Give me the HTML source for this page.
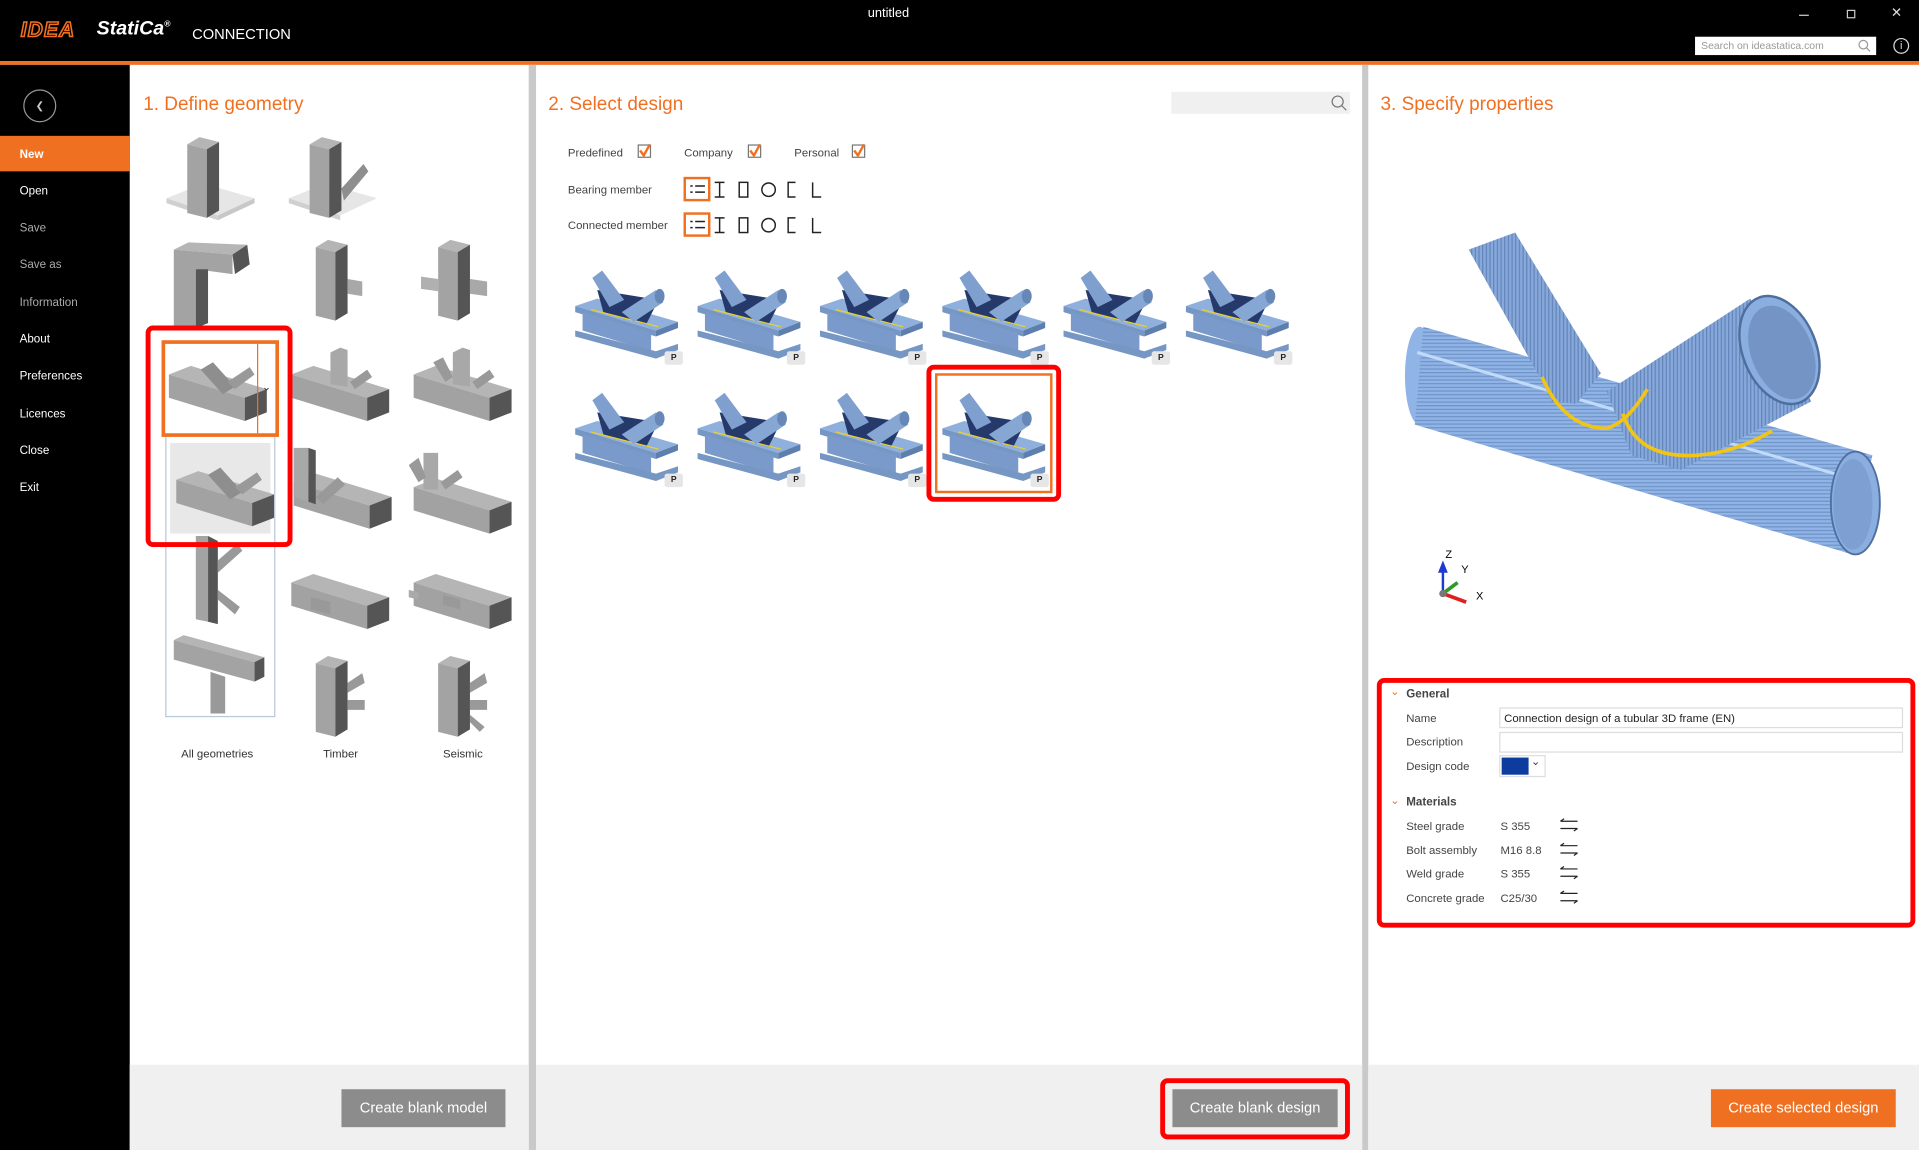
<!DOCTYPE html>
<html><head><meta charset="utf-8">
<style>
*{margin:0;padding:0;box-sizing:border-box}
html,body{width:1919px;height:1150px;overflow:hidden;background:#fff;font-family:"Liberation Sans",sans-serif}
#w{position:absolute;left:0;top:0;width:1568px;height:940px;transform:scale(1.22385);transform-origin:0 0;background:#fff}
.a{position:absolute}
.t{position:absolute;white-space:nowrap}
.menu{color:#fff;font-size:9.5px;left:16px}
.h{color:#f07022;font-size:15.5px}
.lbl{font-size:9.3px;color:#444}
.btn{position:absolute;color:#fff;font-size:12px;text-align:center;line-height:31px}
.rb{position:absolute;border:4px solid #f00;border-radius:6px}
.p{position:absolute;width:15px;height:11px;background:#e6e6e6;border-radius:2px;font-size:7px;font-weight:bold;text-align:center;line-height:11px;color:#222}
</style></head><body>
<div id="w">
<svg width="0" height="0" style="position:absolute">
<defs>
<g id="beam">
<polygon points="4,28 22,21 84,40 66,47" fill="#b5b5b5"/>
<polygon points="4,28 66,47 66,66 4,47" fill="#a2a2a2"/>
<polygon points="66,47 84,40 84,59 66,66" fill="#555"/>
</g>
<g id="col">
<polygon points="26,14 36,8 52,12 42,18" fill="#b5b5b5"/>
<polygon points="26,14 42,18 42,74 26,70" fill="#a3a3a3"/>
<polygon points="42,18 52,12 52,68 42,74" fill="#555"/>
</g>
<g id="diag">
<polygon points="30,24 40,18 58,38 48,44" fill="#8e8e8e"/>
<polygon points="52,34 70,22 74,28 58,40" fill="#999"/>
</g>
<g id="bt">
<polygon points="2,35 20,29 86,48 68,55" fill="#8fb0dc"/>
<polygon points="2,35 68,55 68,60 2,40" fill="#7696c4"/>
<polygon points="8,40 64,57 64,72 8,55" fill="#7a9acb"/>
<polygon points="2,55 68,72 86,66 86,71 68,78 2,60" fill="#7696c4"/>
<polygon points="68,55 86,48 86,53 68,60" fill="#5e7fae"/>
<polygon points="20,22 70,30 60,50 25,40" fill="#253a6b"/>
<line x1="15" y1="38" x2="70" y2="52" stroke="#e8d030" stroke-width="1"/>
<polygon points="16,12 24,6 42,30 30,36" fill="#7f9fcf"/>
<polygon points="40,40 68,22 74,32 50,48" fill="#86a6d4"/>
<ellipse cx="71" cy="27" rx="4" ry="6" fill="#6787b6"/>
</g>
</defs>
</svg>

<!-- header -->
<div class="a" style="left:0;top:0;width:1568px;height:50px;background:#000"></div>
<div class="a" style="left:0;top:50px;width:1568px;height:3px;background:#f07022"></div>
<div class="t" style="left:17px;top:15px;font-size:17px;font-weight:bold;font-style:italic;color:#000;-webkit-text-stroke:1.3px #f07022;letter-spacing:1px">IDEA</div>
<div class="t" style="left:79px;top:15px;font-size:16px;font-weight:bold;font-style:italic;color:#fff">StatiCa<sup style="font-size:7px">®</sup></div>
<div class="t" style="left:157px;top:21px;font-size:12px;color:#fff">CONNECTION</div>
<div class="t" style="left:709px;top:5px;font-size:10.5px;color:#fff">untitled</div>
<div class="a" style="left:1470px;top:12px;width:8px;height:1px;background:#ccc"></div>
<div class="a" style="left:1509px;top:8px;width:7px;height:7px;border:1px solid #ccc"></div>
<div class="t" style="left:1545px;top:4px;font-size:11px;color:#ddd">✕</div>
<div class="a" style="left:1385px;top:30px;width:148px;height:15px;background:#fff"></div>
<div class="t" style="left:1390px;top:32px;font-size:8.5px;color:#999">Search on ideastatica.com</div>
<svg class="a" style="left:1518px;top:32px" width="11" height="11"><circle cx="4.5" cy="4.5" r="3.5" fill="none" stroke="#999"/><line x1="7" y1="7" x2="10" y2="10" stroke="#999"/></svg>
<div class="a" style="left:1547px;top:31px;width:13px;height:13px;border:1px solid #ddd;border-radius:50%;color:#ddd;font-size:9px;text-align:center;line-height:11px">i</div>

<!-- sidebar -->
<div class="a" style="left:0;top:53px;width:106px;height:887px;background:#000"></div>
<div class="a" style="left:19px;top:73px;width:27px;height:27px;border:1px solid #999;border-radius:50%;color:#ccc;font-size:8px;text-align:center;line-height:25px">&#10094;</div>
<div class="a" style="left:0;top:111px;width:106px;height:29px;background:#f07022"></div>
<div class="t menu" style="top:121px;font-weight:bold">New</div>
<div class="t menu" style="top:151px">Open</div>
<div class="t menu" style="top:181px;color:#aaa">Save</div>
<div class="t menu" style="top:211px;color:#aaa">Save as</div>
<div class="t menu" style="top:242px;color:#aaa">Information</div>
<div class="t menu" style="top:272px">About</div>
<div class="t menu" style="top:302px">Preferences</div>
<div class="t menu" style="top:333px">Licences</div>
<div class="t menu" style="top:363px">Close</div>
<div class="t menu" style="top:393px">Exit</div>

<!-- separators and bottom bars -->
<div class="a" style="left:432px;top:53px;width:6px;height:887px;background:#c9c9c9"></div>
<div class="a" style="left:1113px;top:53px;width:5px;height:887px;background:#c9c9c9"></div>
<div class="a" style="left:106px;top:870px;width:326px;height:70px;background:#f0f0f0"></div>
<div class="a" style="left:438px;top:870px;width:675px;height:70px;background:#f0f0f0"></div>
<div class="a" style="left:1118px;top:870px;width:450px;height:70px;background:#f0f0f0"></div>

<!-- panel 1 -->
<div class="t h" style="left:117px;top:77px">1. Define geometry</div>
<svg class="a" style="left:132px;top:108px" width="300" height="520">
 <g transform="translate(4,34)"><polygon points="0,20 30,8 72,20 42,34" fill="#e6e6e6"/><polygon points="0,20 42,34 42,38 0,24" fill="#d0d0d0"/><polygon points="42,34 72,20 72,24 42,38" fill="#c8c8c8"/></g>
 <g transform="translate(-5,-4)"><use href="#col"/></g>
 <g transform="translate(104,34)"><polygon points="0,20 30,8 72,20 42,34" fill="#e6e6e6"/><polygon points="0,20 42,34 42,38 0,24" fill="#d0d0d0"/></g>
 <g transform="translate(95,-4)"><use href="#col"/><polygon points="52,50 70,30 74,36 54,60" fill="#8e8e8e"/></g>
 <g transform="translate(10,88)"><polygon points="0,8 12,2 60,4 48,12" fill="#b5b5b5"/><polygon points="0,8 48,12 48,28 18,24 18,72 0,72" fill="#a3a3a3"/><polygon points="48,12 60,4 62,20 50,28" fill="#555"/><polygon points="18,24 28,24 28,68 18,72" fill="#555"/></g>
 <g transform="translate(100,80)"><use href="#col"/><polygon points="52,40 64,42 64,54 52,52" fill="#a8a8a8"/></g>
 <g transform="translate(200,80)"><use href="#col"/><polygon points="52,40 66,42 66,54 52,52" fill="#a8a8a8"/><polygon points="12,38 26,40 26,50 12,48" fill="#b0b0b0"/></g>
 <g transform="translate(2,170)"><use href="#beam"/><use href="#diag"/></g>
 <g transform="translate(102,170)"><use href="#beam"/><polygon points="36,10 44,6 50,8 50,38 36,36" fill="#a8a8a8"/><polygon points="52,34 66,24 70,30 56,40" fill="#999"/></g>
 <g transform="translate(202,170)"><use href="#beam"/><polygon points="36,10 44,6 50,8 50,38 36,36" fill="#a8a8a8"/><polygon points="20,18 28,14 36,30 30,34" fill="#999"/><polygon points="52,34 66,24 70,30 56,40" fill="#999"/></g>
 <rect x="7" y="254" width="82" height="74" fill="#e8e8e8"/>
 <g transform="translate(8,256)"><use href="#beam"/><use href="#diag"/></g>
 <g transform="translate(104,258)"><use href="#beam"/><polygon points="4,0 16,0 16,44 4,40" fill="#a8a8a8"/><polygon points="16,0 22,2 22,46 16,44" fill="#555"/><polygon points="22,40 40,24 46,30 28,46" fill="#999"/></g>
 <g transform="translate(202,262)"><use href="#beam"/><polygon points="12,0 24,0 24,30 12,30" fill="#a8a8a8"/><polygon points="0,10 8,4 14,20 8,24" fill="#999"/><polygon points="26,24 40,14 44,20 30,30" fill="#999"/></g>
 <g transform="translate(12,330)"><polygon points="16,0 26,0 26,70 16,68" fill="#a3a3a3"/><polygon points="26,0 34,4 34,72 26,70" fill="#555"/><polygon points="34,20 50,6 54,12 34,30" fill="#999"/><polygon points="34,44 52,58 48,64 34,52" fill="#999"/></g>
 <g transform="translate(102,340)"><use href="#beam"/><polygon points="20,40 36,44 36,54 20,50" fill="#999"/></g>
 <g transform="translate(202,340)"><use href="#beam"/><polygon points="28,38 42,42 42,50 28,46" fill="#999"/><polygon points="0,34 8,36 8,42 0,40" fill="#aaa"/></g>
 <g transform="translate(10,405)"><polygon points="0,10 8,6 74,24 66,28" fill="#b5b5b5"/><polygon points="0,10 66,28 66,44 0,26" fill="#a3a3a3"/><polygon points="66,28 74,24 74,40 66,44" fill="#555"/><polygon points="30,36 42,40 42,70 30,70" fill="#999"/></g>
 <g transform="translate(100,420)"><use href="#col"/><polygon points="52,30 64,22 66,30 52,38" fill="#999"/><polygon points="52,44 66,44 66,52 52,52" fill="#999"/></g>
 <g transform="translate(200,420)"><use href="#col"/><polygon points="52,30 64,22 66,30 52,38" fill="#999"/><polygon points="52,44 66,44 66,52 52,52" fill="#999"/><polygon points="52,56 64,66 60,70 52,62" fill="#999"/></g>
</svg>
<div class="a" style="left:135px;top:356px;width:90px;height:230px;border:1px solid #b8c8dc;border-top:0"></div>
<div class="a" style="left:132px;top:278px;width:96px;height:79px;border:3px solid #f07022;background:transparent"></div>
<div class="a" style="left:210px;top:281px;width:1px;height:73px;background:#f07022"></div>
<div class="t" style="left:214px;top:311px;font-size:9px;color:#333">&#8964;</div>
<div class="rb" style="left:119px;top:266px;width:120px;height:181px"></div>
<div class="t lbl" style="left:148px;top:611px;color:#333">All geometries</div>
<div class="t lbl" style="left:264px;top:611px;color:#333">Timber</div>
<div class="t lbl" style="left:362px;top:611px;color:#333">Seismic</div>
<div class="btn" style="left:279px;top:890px;width:134px;height:31px;background:#8c8c8c">Create blank model</div>

<!-- panel 2 -->
<div class="t h" style="left:448px;top:77px">2. Select design</div>
<div class="a" style="left:957px;top:75px;width:146px;height:18px;background:#f0f0f0"></div>
<svg class="a" style="left:1087px;top:77px" width="14" height="14"><circle cx="6" cy="6" r="4.5" fill="none" stroke="#777"/><line x1="9" y1="9" x2="13" y2="13" stroke="#777"/></svg>
<div class="t lbl" style="left:464px;top:120px">Predefined</div>
<div class="t lbl" style="left:559px;top:120px">Company</div>
<div class="t lbl" style="left:649px;top:120px">Personal</div>
<svg class="a" style="left:520px;top:117px" width="200" height="14">
<g fill="none"><rect x="1.5" y="1.5" width="10" height="10" stroke="#777"/><path d="M3 6 L6 10 L11 1" stroke="#f07022" stroke-width="2"/>
<rect x="91.5" y="1.5" width="10" height="10" stroke="#777"/><path d="M93 6 L96 10 L101 1" stroke="#f07022" stroke-width="2"/>
<rect x="176.5" y="1.5" width="10" height="10" stroke="#777"/><path d="M178 6 L181 10 L186 1" stroke="#f07022" stroke-width="2"/></g></svg>
<div class="t lbl" style="left:464px;top:150px">Bearing member</div>
<div class="t lbl" style="left:464px;top:179px">Connected member</div>
<svg class="a" style="left:558px;top:144px" width="120" height="50">
<g fill="none" stroke="#222" stroke-width="1.2">
<rect x="1.5" y="1.5" width="20" height="18" stroke="#f07022" stroke-width="2"/>
<path d="M6 8h2M6 13h2M10 8h8M10 13h8"/>
<path d="M26 5h8M30 5v12M26 17h8"/><rect x="46" y="5" width="7" height="12"/><circle cx="70" cy="11" r="5.5"/><path d="M92 5h-6v12h6"/><path d="M106 5v12h7"/>
<g transform="translate(0,29)"><rect x="1.5" y="1.5" width="20" height="18" stroke="#f07022" stroke-width="2"/>
<path d="M6 8h2M6 13h2M10 8h8M10 13h8"/>
<path d="M26 5h8M30 5v12M26 17h8"/><rect x="46" y="5" width="7" height="12"/><circle cx="70" cy="11" r="5.5"/><path d="M92 5h-6v12h6"/><path d="M106 5v12h7"/></g>
</g></svg>
<svg class="a" style="left:468px;top:215px" width="600" height="180">
<use href="#bt" x="0" y="0"/><use href="#bt" x="100" y="0"/><use href="#bt" x="200" y="0"/><use href="#bt" x="300" y="0"/><use href="#bt" x="399" y="0"/><use href="#bt" x="499" y="0"/>
<use href="#bt" x="0" y="100"/><use href="#bt" x="100" y="100"/><use href="#bt" x="200" y="100"/><use href="#bt" x="300" y="100"/>
</svg>
<div class="p" style="left:543px;top:287px">P</div><div class="p" style="left:643px;top:287px">P</div><div class="p" style="left:742px;top:287px">P</div><div class="p" style="left:842px;top:287px">P</div><div class="p" style="left:941px;top:287px">P</div><div class="p" style="left:1041px;top:287px">P</div>
<div class="p" style="left:543px;top:387px">P</div><div class="p" style="left:643px;top:387px">P</div><div class="p" style="left:742px;top:387px">P</div><div class="p" style="left:842px;top:387px">P</div>
<div class="a" style="left:764px;top:305px;width:96px;height:98px;border:2px solid #f07022"></div>
<div class="rb" style="left:757px;top:298px;width:110px;height:112px"></div>
<div class="btn" style="left:958px;top:890px;width:135px;height:31px;background:#8c8c8c">Create blank design</div>
<div class="rb" style="left:948px;top:881px;width:155px;height:50px"></div>

<!-- panel 3 -->
<div class="t h" style="left:1128px;top:77px">3. Specify properties</div>
<svg class="a" style="left:1118px;top:160px" width="450" height="350">
<defs><pattern id="st" width="3" height="3" patternUnits="userSpaceOnUse"><rect width="3" height="3" fill="#90b4e6"/><rect width="3" height="1" fill="#7093c8"/></pattern>
<pattern id="st2" width="3" height="3" patternUnits="userSpaceOnUse"><rect width="3" height="3" fill="#86a8da"/><rect width="1" height="3" fill="#6284b8"/></pattern></defs>
<!-- main tube -->
<ellipse cx="42" cy="147" rx="12" ry="40" fill="#90b4e6"/>
<polygon points="45,107 412,212 392,292 38,187" fill="url(#st)"/>
<line x1="40" y1="128" x2="405" y2="234" stroke="#c0daf8" stroke-width="2.5"/>
<ellipse cx="398" cy="251" rx="20" ry="42" fill="#8aaee0" stroke="#4e6e9e" stroke-width="1.5"/>
<ellipse cx="396" cy="252" rx="16" ry="37" fill="#7e9fd2"/>
<!-- diag tube 1 -->
<polygon points="82,44 120,30 190,145 170,170 150,168 140,148" fill="url(#st2)"/>
<!-- diag tube 2 -->
<polygon points="195,160 312,84 362,168 255,224 215,212" fill="url(#st2)"/>
<ellipse cx="336" cy="126" rx="30" ry="46" transform="rotate(-22 336 126)" fill="#8aaee0" stroke="#4e6e9e" stroke-width="2"/>
<ellipse cx="338" cy="128" rx="25" ry="40" transform="rotate(-22 338 128)" fill="#7594c6"/>
<path d="M142 148 Q160 190 195 190 Q212 185 228 158 M208 178 Q220 215 268 212 Q300 210 330 192" fill="none" stroke="#f0c418" stroke-width="3"/>
<!-- axes -->
<line x1="61" y1="325" x2="61" y2="305" stroke="#1f3ad0" stroke-width="2"/><polygon points="57,308 61,298 65,308" fill="#1f3ad0"/>
<line x1="61" y1="325" x2="73" y2="316" stroke="#2a9a2a" stroke-width="3"/>
<line x1="61" y1="325" x2="80" y2="332" stroke="#e02020" stroke-width="3"/>
<circle cx="61" cy="325" r="3" fill="#777"/>
<text x="63" y="296" font-size="9" font-family="Liberation Sans">Z</text><text x="76" y="308" font-size="9" font-family="Liberation Sans">Y</text><text x="88" y="330" font-size="9" font-family="Liberation Sans">X</text>
</svg>

<div class="t" style="left:1136px;top:560px;font-size:9px;color:#f07022">&#8964;</div>
<div class="t" style="left:1149px;top:562px;font-size:9.5px;font-weight:bold;color:#444">General</div>
<div class="t lbl" style="left:1149px;top:582px">Name</div>
<div class="a" style="left:1225px;top:578px;width:330px;height:17px;border:1px solid #ddd"></div>
<div class="t" style="left:1229px;top:582px;font-size:9.3px;color:#222">Connection design of a tubular 3D frame (EN)</div>
<div class="t lbl" style="left:1149px;top:601px">Description</div>
<div class="a" style="left:1225px;top:598px;width:330px;height:17px;border:1px solid #ddd"></div>
<div class="t lbl" style="left:1149px;top:621px">Design code</div>
<div class="a" style="left:1225px;top:617px;width:38px;height:18px;border:1px solid #ddd"></div>
<div class="a" style="left:1227px;top:619px;width:22px;height:14px;background:#0e3b9e"></div>
<div class="t" style="left:1251px;top:617px;font-size:9px;color:#333">&#8964;</div>
<div class="t" style="left:1136px;top:649px;font-size:9px;color:#f07022">&#8964;</div>
<div class="t" style="left:1149px;top:650px;font-size:9.5px;font-weight:bold;color:#444">Materials</div>
<div class="t lbl" style="left:1149px;top:670px">Steel grade</div><div class="t lbl" style="left:1226px;top:670px">S 355</div>
<div class="t lbl" style="left:1149px;top:690px">Bolt assembly</div><div class="t lbl" style="left:1226px;top:690px">M16 8.8</div>
<div class="t lbl" style="left:1149px;top:709px">Weld grade</div><div class="t lbl" style="left:1226px;top:709px">S 355</div>
<div class="t lbl" style="left:1149px;top:729px">Concrete grade</div><div class="t lbl" style="left:1226px;top:729px">C25/30</div>
<svg class="a" style="left:1274px;top:668px" width="16" height="75"><g fill="none" stroke="#222" stroke-width="1">
<path d="M1 3h14M1 3l3-2M1 9h14M15 9l-3 2"/><path d="M1 23h14M1 23l3-2M1 29h14M15 29l-3 2"/><path d="M1 42h14M1 42l3-2M1 48h14M15 48l-3 2"/><path d="M1 62h14M1 62l3-2M1 68h14M15 68l-3 2"/></g></svg>
<div class="rb" style="left:1125px;top:554px;width:440px;height:204px"></div>
<div class="btn" style="left:1398px;top:890px;width:151px;height:31px;background:#f07022">Create selected design</div>
</div>
</body></html>
